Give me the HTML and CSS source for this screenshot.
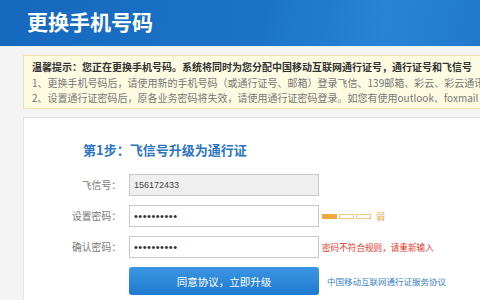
FILE: index.html
```html
<!DOCTYPE html>
<html lang="zh-CN">
<head>
  <meta charset="UTF-8">
  <title>更换手机号码</title>
  <link rel="stylesheet" href="styles.css">
</head>
<body>
  <div class="header">
    <h1>更换手机号码</h1>
  </div>
  <div class="page">
    <div class="notice">
      <p class="notice-title">温馨提示：您正在更换手机号码。系统将同时为您分配中国移动互联网通行证号，通行证号和飞信号</p>
      <p>1、更换手机号码后，请使用新的手机号码（或通行证号、邮箱）登录飞信、139邮箱、彩云、彩云通讯录</p>
      <p>2、设置通行证密码后，原各业务密码将失效，请使用通行证密码登录。如您有使用outlook、foxmail</p>
    </div>
    <div class="card">
      <h2>第1步：飞信号升级为通行证</h2>
      <div class="form">
        <div class="row">
          <label>飞信号：</label>
          <input class="field readonly" type="text" value="156172433" readonly>
        </div>
        <div class="row">
          <label>设置密码：</label>
          <input class="field" type="password" value="1234567890">
          <div class="strength">
            <span class="bar on"></span>
            <span class="bar"></span>
            <span class="bar"></span>
            <span class="level">弱</span>
          </div>
        </div>
        <div class="row">
          <label>确认密码：</label>
          <input class="field" type="password" value="1234567890">
          <span class="error">密码不符合规则，请重新输入</span>
        </div>
        <div class="row actions">
          <button class="submit">同意协议，立即升级</button>
          <a class="terms" href="#">中国移动互联网通行证服务协议</a>
        </div>
      </div>
    </div>
  </div>
</body>
</html>
```

FILE: styles.css
```css
html, body {
  overflow: hidden;
}
body {
  margin: 0;
  width: 480px;
  height: 300px;
  background: #f4f4f4;
  font-family: "Noto Sans CJK SC", "Liberation Sans", sans-serif;
}
.header {
  height: 46px;
  background: linear-gradient(100deg, #1668bd 0%, #1b74c8 55%, #2784d6 80%, #2179cc 100%);
  padding-left: 27px;
}
.header h1 {
  margin: 0;
  color: #fff;
  font-size: 21px;
  line-height: 42px;
  font-weight: bold;
}
.page {
  padding: 9px 0 0 23px;
  overflow: hidden;
}
.notice {
  width: 457px;
  height: 54px;
  overflow: hidden;
  background: #fdfbe1;
  border: 1px solid #ece3ad;
  border-right: 0;
  padding: 3px 0 4px 8px;
  box-sizing: border-box;
}
.notice p {
  margin: 0;
  font-size: 10px;
  line-height: 15.5px;
  color: #777;
  white-space: nowrap;
}
.notice .notice-title {
  color: #333;
  font-weight: bold;
}
.card {
  margin-top: 8px;
  width: 457px;
  height: 184px;
  background: #fff;
  border: 1px solid #e4e4e4;
  border-right: 0;
  border-bottom: 0;
  box-sizing: border-box;
  padding: 22px 0 0 59px;
}
.card h2 {
  margin: 0 0 14px;
  font-size: 13px;
  line-height: 20px;
  color: #2a75c0;
  font-weight: bold;
}
.form {
  display: flex;
  flex-direction: column;
  gap: 9px;
  margin-left: -59px;
}
.row {
  display: flex;
  align-items: center;
  height: 22px;
}
.row label {
  width: 105px;
  text-align: right;
  font-size: 9.8px;
  color: #777;
  padding-right: 8px;
  box-sizing: border-box;
}
.field {
  width: 190px;
  height: 22px;
  box-sizing: border-box;
  border: 1px solid #c9c9c9;
  padding: 0 4px;
  font-family: "Liberation Sans", sans-serif;
  font-size: 9px;
  color: #333;
  background: #fff;
  outline: none;
}
.field[type="password"] {
  font-size: 11px;
  letter-spacing: 0.5px;
}
.field.readonly {
  background: #efefef;
  color: #444;
}
.strength {
  display: flex;
  align-items: center;
  gap: 2px;
  margin-left: 3px;
}
.bar {
  width: 13px;
  height: 3px;
  border: 1px solid #f0c67a;
  background: #fff;
}
.bar.on {
  background: #f2a63c;
  border-color: #f2a63c;
}
.level {
  font-size: 9px;
  color: #f0a43a;
  margin-left: 3px;
}
.error {
  margin-left: 3px;
  font-size: 8.6px;
  color: #e23a2c;
  white-space: nowrap;
}
.actions {
  height: 28px;
  padding-left: 105px;
}
.submit {
  width: 190px;
  height: 28px;
  border: 0;
  border-radius: 3px;
  background: linear-gradient(to bottom, #3b95e2, #1f7bd0);
  color: #fff;
  font-family: "Noto Sans CJK SC", sans-serif;
  font-size: 10.5px;
  cursor: pointer;
}
.terms {
  margin-left: 8px;
  font-size: 8.5px;
  color: #3a7fc4;
  text-decoration: none;
  white-space: nowrap;
}
```
